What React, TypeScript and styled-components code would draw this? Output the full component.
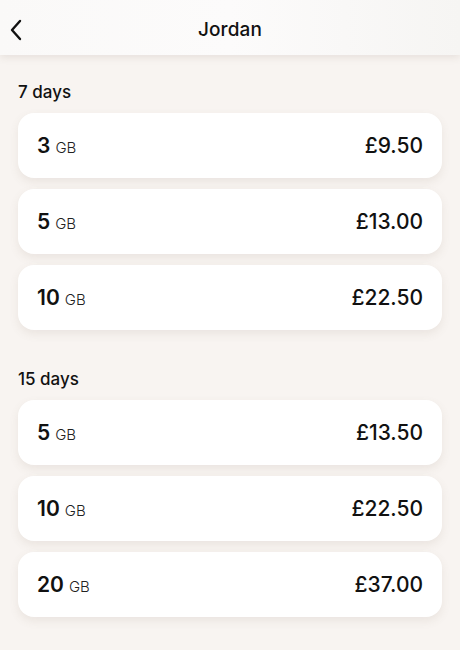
import React from 'react';
import styled, { createGlobalStyle } from 'styled-components';

const GlobalStyle = createGlobalStyle`
  body {
    margin: 0;
    background: #f8f4f1;
    font-family: 'Inter', 'Noto Sans', sans-serif;
    color: #111111;
  }
`;

const Page = styled.div`
  min-height: 650px;
  display: flex;
  flex-direction: column;
`;

const Header = styled.header`
  height: 55px;
  display: grid;
  grid-template-columns: 40px 1fr 40px;
  align-items: center;
  background: linear-gradient(90deg, #faf9f8 0%, #fcfbfb 50%, #f6f5f3 100%);
  box-shadow: 0 2px 8px rgba(90, 70, 60, 0.12);
  position: relative;
  z-index: 1;
`;

const BackButton = styled.button`
  border: 0;
  background: transparent;
  padding: 4px 0 0 8px;
  height: 55px;
  display: flex;
  align-items: center;
  color: #111111;
  cursor: pointer;
`;

const Title = styled.h1`
  margin: 4px 0 0;
  text-align: center;
  font-size: 19px;
  font-weight: 500;
  letter-spacing: 0.1px;
`;

const Content = styled.main`
  padding: 26px 18px 20px;
  display: flex;
  flex-direction: column;
  gap: 38px;
`;

const Section = styled.section`
  display: flex;
  flex-direction: column;
`;

const SectionLabel = styled.h2`
  margin: 0 0 9px;
  font-size: 17px;
  font-weight: 500;
  line-height: 23px;
`;

const List = styled.div`
  display: flex;
  flex-direction: column;
  gap: 11px;
`;

const Card = styled.button`
  height: 65px;
  border: 0;
  border-radius: 16px;
  background: #ffffff;
  box-shadow: 0 4px 10px rgba(120, 95, 80, 0.1);
  padding: 0 19px;
  display: flex;
  align-items: center;
  justify-content: space-between;
  font-family: inherit;
  color: inherit;
  cursor: pointer;
`;

const Amount = styled.span`
  display: flex;
  align-items: baseline;
  gap: 5px;
`;

const Num = styled.span`
  font-size: 21px;
  font-weight: 600;
`;

const Unit = styled.span`
  font-size: 15px;
  font-weight: 300;
  color: #222;
`;

const Price = styled.span`
  font-size: 21px;
  font-weight: 500;
`;

type Plan = { gb: number; price: string };

const sections: { label: string; plans: Plan[] }[] = [
  {
    label: '7 days',
    plans: [
      { gb: 3, price: '£9.50' },
      { gb: 5, price: '£13.00' },
      { gb: 10, price: '£22.50' },
    ],
  },
  {
    label: '15 days',
    plans: [
      { gb: 5, price: '£13.50' },
      { gb: 10, price: '£22.50' },
      { gb: 20, price: '£37.00' },
    ],
  },
];

export default function App() {
  return (
    <Page>
      <GlobalStyle />
      <Header>
        <BackButton aria-label="Back">
          <svg width="16" height="24" viewBox="0 0 16 24" fill="none">
            <path d="M12 3L4 12l8 9" stroke="currentColor" strokeWidth="2.4" strokeLinecap="round" strokeLinejoin="round" />
          </svg>
        </BackButton>
        <Title>Jordan</Title>
        <span />
      </Header>
      <Content>
        {sections.map((s) => (
          <Section key={s.label}>
            <SectionLabel>{s.label}</SectionLabel>
            <List>
              {s.plans.map((p) => (
                <Card key={p.gb}>
                  <Amount>
                    <Num>{p.gb}</Num>
                    <Unit>GB</Unit>
                  </Amount>
                  <Price>{p.price}</Price>
                </Card>
              ))}
            </List>
          </Section>
        ))}
      </Content>
    </Page>
  );
}
